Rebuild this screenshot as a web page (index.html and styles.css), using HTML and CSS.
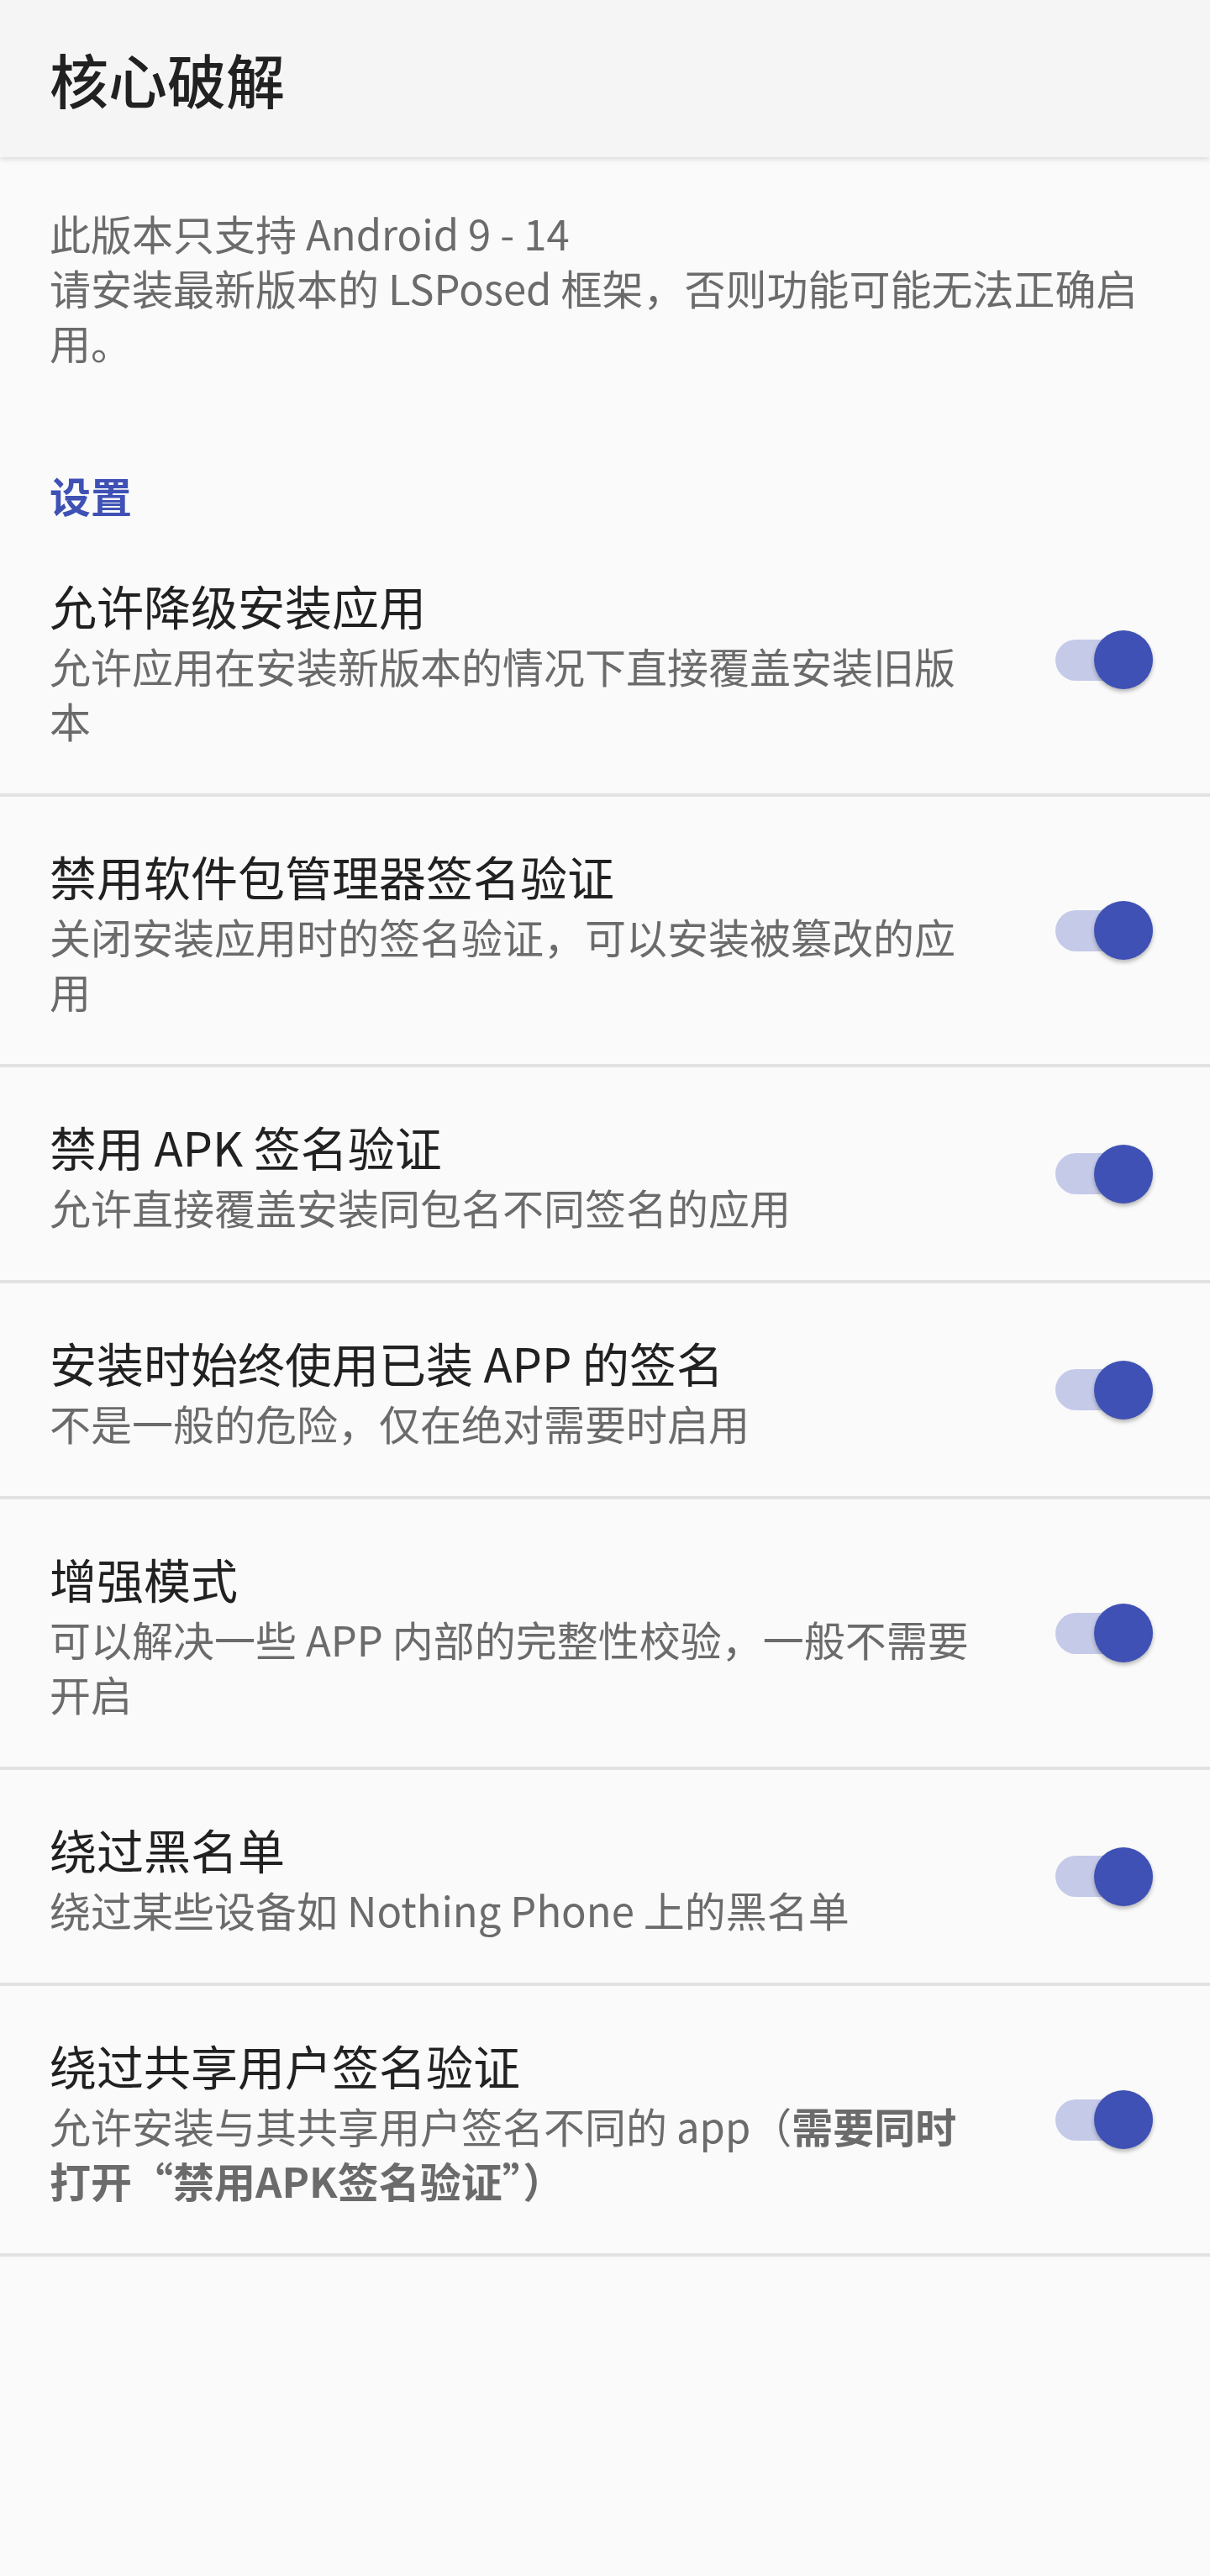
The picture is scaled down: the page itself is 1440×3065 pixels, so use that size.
FILE: index.html
```html
<!DOCTYPE html>
<html lang="zh-CN">
<head>
    <meta charset="UTF-8">
    <title>核心破解</title>
    <link rel="stylesheet" href="styles.css">
</head>
<body>

<header class="toolbar">
    <h1 class="toolbar-title">核心破解</h1>
</header>

<main class="content">
    <p class="notice">此版本只支持 Android 9 - 14<br>请安装最新版本的 LSPosed 框架，否则功能可能无法正确启用。</p>

    <div class="category">设置</div>

    <!-- PREFERENCES -->
    <div class="pref">
        <div class="pref-text">
            <div class="pref-title">允许降级安装应用</div>
            <div class="pref-summary">允许应用在安装新版本的情况下直接覆盖安装旧版本</div>
        </div>
        <div class="switch"><span class="thumb"></span></div>
    </div>

    <div class="pref">
        <div class="pref-text">
            <div class="pref-title">禁用软件包管理器签名验证</div>
            <div class="pref-summary">关闭安装应用时的签名验证，可以安装被篡改的应用</div>
        </div>
        <div class="switch"><span class="thumb"></span></div>
    </div>

    <div class="pref">
        <div class="pref-text">
            <div class="pref-title">禁用 APK 签名验证</div>
            <div class="pref-summary">允许直接覆盖安装同包名不同签名的应用</div>
        </div>
        <div class="switch"><span class="thumb"></span></div>
    </div>

    <div class="pref">
        <div class="pref-text">
            <div class="pref-title">安装时始终使用已装 APP 的签名</div>
            <div class="pref-summary">不是一般的危险，仅在绝对需要时启用</div>
        </div>
        <div class="switch"><span class="thumb"></span></div>
    </div>

    <div class="pref">
        <div class="pref-text">
            <div class="pref-title">增强模式</div>
            <div class="pref-summary">可以解决一些 APP 内部的完整性校验，一般不需要开启</div>
        </div>
        <div class="switch"><span class="thumb"></span></div>
    </div>

    <div class="pref">
        <div class="pref-text">
            <div class="pref-title">绕过黑名单</div>
            <div class="pref-summary">绕过某些设备如 Nothing Phone 上的黑名单</div>
        </div>
        <div class="switch"><span class="thumb"></span></div>
    </div>

    <div class="pref">
        <div class="pref-text">
            <div class="pref-title">绕过共享用户签名验证</div>
            <div class="pref-summary">允许安装与其共享用户签名不同的 app（<b>需要同时打开“禁用APK签名验证”）</b></div>
        </div>
        <div class="switch"><span class="thumb"></span></div>
    </div>
</main>

</body>
</html>
```

FILE: styles.css
```css
body {
    margin: 0;
    background-color: #fafafa;
    font-family: "Noto Sans CJK SC", "Noto Sans", sans-serif;
    color: #212121;
}

.toolbar {
    height: 187px;
    display: flex;
    align-items: center;
    padding-left: 59px;
    background-color: #f5f5f5;
    box-shadow: 0 2px 7px rgba(0, 0, 0, 0.14);
    position: relative;
}

.toolbar-title {
    margin: 0;
    font-size: 70px;
    font-weight: 500;
    line-height: 1;
    color: #212121;
}

.notice {
    margin: 0;
    padding: 57px 59px 0;
    font-size: 49px;
    line-height: 65px;
    color: #6b6b6b;
}

.category {
    padding: 117px 59px 5px;
    font-size: 49px;
    line-height: 65px;
    font-weight: 700;
    color: #3f51b5;
}

.pref {
    display: flex;
    align-items: center;
    padding: 55px 68px 55px 59px;
    border-bottom: 4px solid #e2e2e2;
}

.pref-text {
    flex: 1;
    padding-right: 94px;
}

.pref-title {
    font-size: 56px;
    line-height: 78px;
    color: #212121;
}

.pref-summary {
    font-size: 49px;
    line-height: 65px;
    color: #6b6b6b;
}

.pref-summary b {
    font-weight: 700;
}

/* switch, always on */
.switch {
    width: 116px;
    height: 49px;
    border-radius: 25px;
    background-color: #c5cae9;
    display: flex;
    align-items: center;
    justify-content: flex-end;
}

.thumb {
    width: 70px;
    height: 70px;
    border-radius: 50%;
    background-color: #3f51b5;
    box-shadow: 0 3px 5px rgba(0, 0, 0, 0.28);
}
```
